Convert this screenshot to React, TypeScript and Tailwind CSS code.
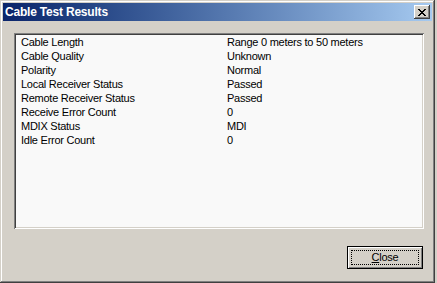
const rows: [string, string][] = [
  ["Cable Length", "Range 0 meters to 50 meters"],
  ["Cable Quality", "Unknown"],
  ["Polarity", "Normal"],
  ["Local Receiver Status", "Passed"],
  ["Remote Receiver Status", "Passed"],
  ["Receive Error Count", "0"],
  ["MDIX Status", "MDI"],
  ["Idle Error Count", "0"],
];

function CloseBox() {
  return (
    <div className="w-[16px] h-[14px] bg-[#d4d0c8] flex items-center justify-center shadow-[inset_-1px_-1px_#404040,inset_1px_1px_#ffffff,inset_-2px_-2px_#808080,inset_2px_2px_#d4d0c8]">
      <svg width="8" height="7" viewBox="0 0 8 7" shapeRendering="crispEdges">
        <path d="M0 0h2v1H0zM6 0h2v1H6zM1 1h2v1H1zM5 1h2v1H5zM2 2h4v1H2zM3 3h2v1H3zM2 4h4v1H2zM1 5h2v1H1zM5 5h2v1H5zM0 6h2v1H0zM6 6h2v1H6z" fill="#000" />
      </svg>
    </div>
  );
}

export default function App() {
  return (
    <div className="w-[437px] h-[283px] bg-[#d4d0c8] font-['Liberation_Sans',Arial,sans-serif] text-[11px] text-black">
      <div className="w-[435px] h-[283px] p-[3px] flex flex-col shadow-[inset_-1px_-1px_#404040,inset_1px_1px_#d4d0c8,inset_-2px_-2px_#808080,inset_2px_2px_#ffffff]">
        {/* title bar */}
        <div className="h-[18px] flex items-center justify-between pl-[2px] pr-[2px] bg-gradient-to-r from-[#0a246a] to-[#a6caf0]">
          <span className="text-white font-bold text-[12px] leading-none tracking-[-0.2px]">Cable Test Results</span>
          <CloseBox />
        </div>

        {/* list */}
        <div className="mt-[12px] ml-[11px] w-[410px] h-[196px] p-[2px] bg-[#f9f9f9] shadow-[inset_1px_1px_#808080,inset_-1px_-1px_#ffffff,inset_2px_2px_#404040,inset_-2px_-2px_#d4d0c8]">
          <div className="grid grid-cols-[206px_1fr] pl-[5px] leading-[14px] tracking-[-0.25px]">
            {rows.map(([k, v]) => (
              <div key={k} className="contents">
                <span className="h-[14px] whitespace-nowrap">{k}</span>
                <span className="h-[14px] whitespace-nowrap">{v}</span>
              </div>
            ))}
          </div>
        </div>

        {/* footer */}
        <div className="flex justify-end mt-[17px] mr-[9px]">
          <button className="w-[76px] h-[23px] border border-black p-[3px] flex bg-[#d4d0c8] shadow-[inset_1px_1px_#ffffff,inset_-1px_-1px_#808080]">
            <span className="flex-1 border border-dotted border-black flex items-center justify-center leading-none text-[11px] tracking-[-0.25px]">
              <u>C</u>lose
            </span>
          </button>
        </div>
      </div>
    </div>
  );
}
